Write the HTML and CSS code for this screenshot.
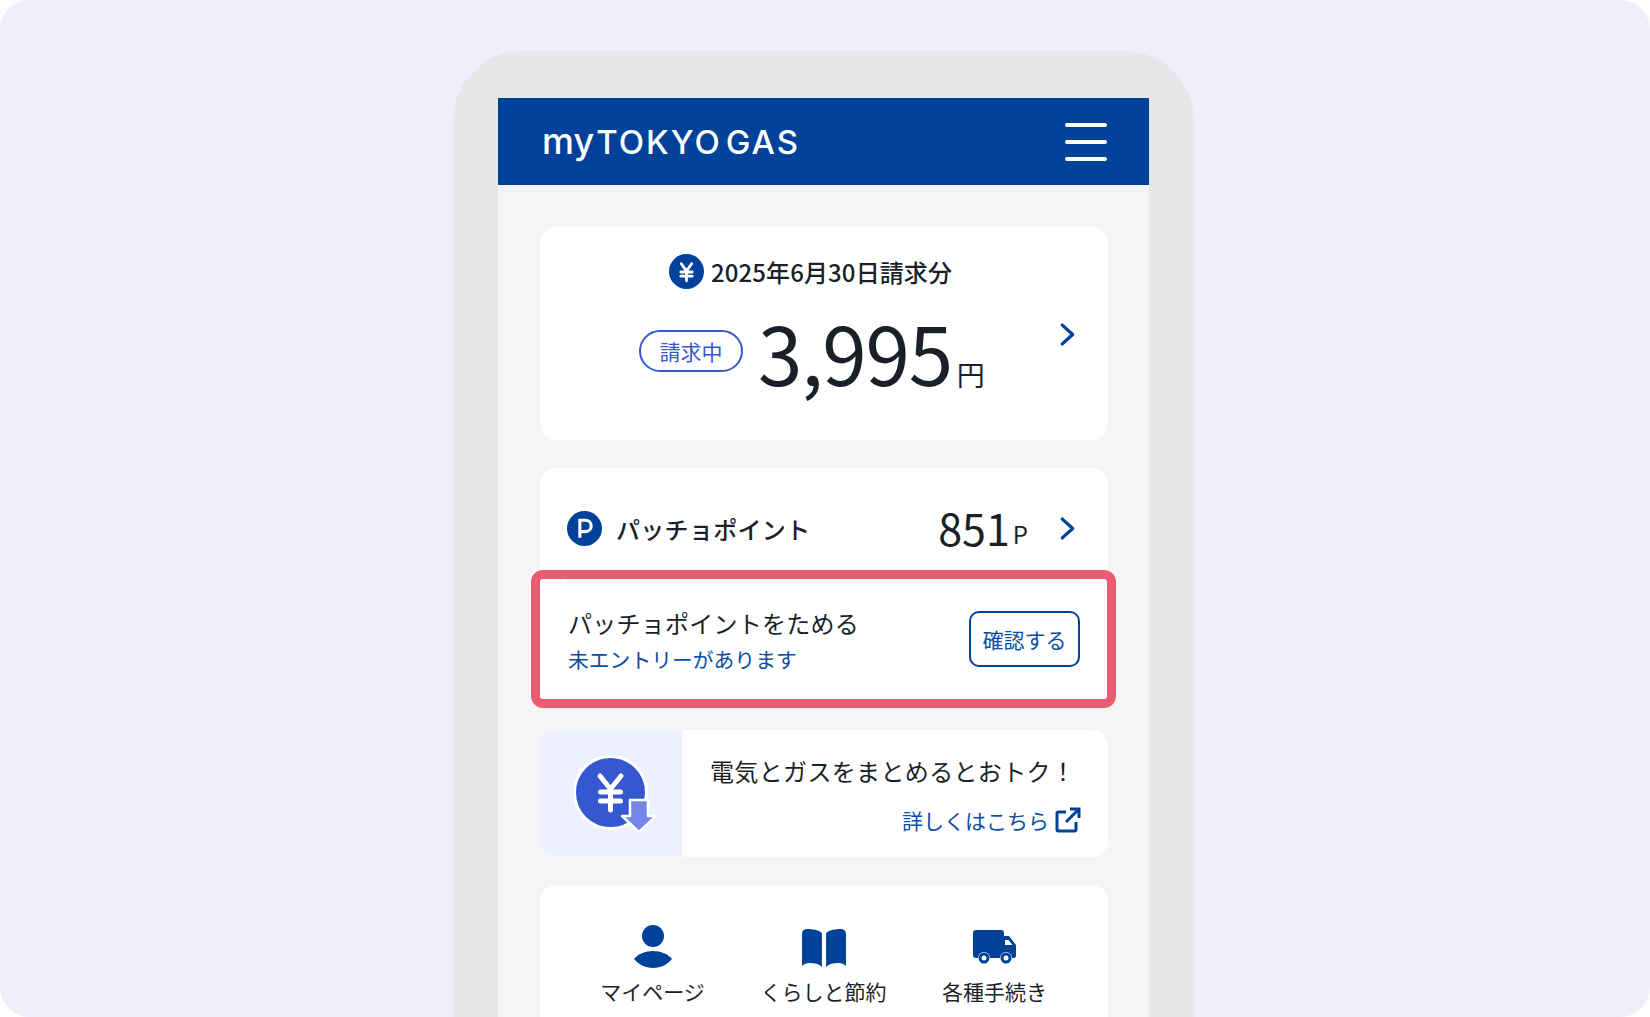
FILE: index.html
```html
<!DOCTYPE html>
<html lang="ja">
<head>
    <meta charset="UTF-8">
    <meta name="viewport" content="width=device-width, initial-scale=1.0">
    <title>myTOKYOGAS</title>
    <link rel="stylesheet" href="styles.css">
</head>
<body>
    <div class="stage">
        <div class="phone">
            <header class="app-header">
                <div class="logo"><span class="logo-my">my</span><span class="logo-tokyo">TOKYO</span><span class="logo-gas">GAS</span></div>
                <div class="menu-btn"><span></span><span></span><span></span></div>
            </header>

            <main class="content">
                <section class="card bill">
                    <div class="bill-title">
                        <svg class="icon-circle" viewBox="0 0 34 34"><circle cx="17" cy="17" r="17" fill="#00419a"/><path d="M12 9.500l5 7 5-7M11.500 17.500h11M11.500 21.500h11M17 17v9" fill="none" stroke="#fff" stroke-width="2.800" stroke-linecap="round" stroke-linejoin="round"/></svg>
                        <span>2025年6月30日請求分</span>
                    </div>
                    <div class="bill-amount">
                        <span class="badge">請求中</span>
                        <span class="amount">3,995</span>
                        <span class="yen">円</span>
                    </div>
                    <svg class="chevron chevron-bill" viewBox="0 0 16 24"><path d="M3 3l10 9-10 9" fill="none" stroke="#00419a" stroke-width="3.200" stroke-linecap="round" stroke-linejoin="round"/></svg>
                </section>

                <section class="card points">
                    <div class="points-row">
                        <svg class="icon-circle" viewBox="0 0 34 34"><circle cx="17" cy="17" r="17" fill="#00419a"/><path d="M12.500 26V9h5.500a5.500 5.500 0 0 1 0 11h-5.500" fill="none" stroke="#fff" stroke-width="3"/></svg>
                        <span class="points-label">パッチョポイント</span>
                        <span class="points-value">851</span>
                        <span class="points-unit">P</span>
                        <svg class="chevron" viewBox="0 0 16 24"><path d="M3 3l10 9-10 9" fill="none" stroke="#00419a" stroke-width="3.200" stroke-linecap="round" stroke-linejoin="round"/></svg>
                    </div>
                    <div class="highlight">
                        <div class="divider"></div>
                        <div class="entry-row">
                            <div>
                                <div class="entry-title">パッチョポイントをためる</div>
                                <div class="entry-sub">未エントリーがあります</div>
                            </div>
                            <a class="confirm-btn" href="#">確認する</a>
                        </div>
                    </div>
                </section>

                <section class="card promo">
                    <div class="promo-icon">
                        <svg viewBox="0 0 84 80" width="84" height="80">
                            <circle cx="36.500" cy="36.500" r="36" fill="#3558cf" stroke="#fff" stroke-width="3"/>
                            <path d="M26 20l10.500 13L47 20M26.500 36h20M26.500 45h20M36.500 33v21" fill="none" stroke="#fff" stroke-width="5" stroke-linecap="round" stroke-linejoin="round"/>
                            <path d="M56 44h18v16h8L65 76 48 60h8z" fill="#7387e8" stroke="#fff" stroke-width="2.500" stroke-linejoin="round"/>
                        </svg>
                    </div>
                    <div class="promo-body">
                        <div class="promo-title">電気とガスをまとめるとおトク！</div>
                        <a class="promo-link" href="#">詳しくはこちら
                            <svg viewBox="0 0 26 26" width="26" height="26"><path d="M11 5H3.500A1.500 1.500 0 0 0 2 6.500v16A1.500 1.500 0 0 0 3.500 24h16a1.500 1.500 0 0 0 1.500-1.500V15M15 2h9v9M24 2L11 15" fill="none" stroke="#00419a" stroke-width="3"/></svg>
                        </a>
                    </div>
                </section>

                <section class="card shortcuts">
                    <a class="shortcut" href="#">
                        <div class="shortcut-icon"><svg viewBox="0 0 40 44" width="40" height="44"><circle cx="20" cy="11" r="11" fill="#00419a"/><path d="M1 34c4-5 11-8 19-8s15 3 19 8c-4 5-11 9-19 9S5 39 1 34z" fill="#00419a"/></svg></div>
                        <span>マイページ</span>
                    </a>
                    <a class="shortcut" href="#">
                        <div class="shortcut-icon"><svg viewBox="0 0 44 40" width="46" height="39" preserveAspectRatio="none"><path d="M1 6c0-3 2-5 5-5 5 0 11 1 14 4v35c-3-3-7-4-12-4-3 0-5 1-7 3zM43 6c0-3-2-5-5-5-5 0-11 1-14 4v35c3-3 7-4 12-4 3 0 5 1 7 3z" fill="#00419a"/></svg></div>
                        <span>くらしと節約</span>
                    </a>
                    <a class="shortcut" href="#">
                        <div class="shortcut-icon"><svg viewBox="0 0 44 36" width="44" height="36"><path d="M3 1h25a3 3 0 0 1 3 3v3h5l7 9v11a2 2 0 0 1-2 2h-2a6 6 0 0 0-12 0H17a6 6 0 0 0-12 0H3a3 3 0 0 1-3-3V4a3 3 0 0 1 3-3z" fill="#00419a"/><path d="M32 11h3.500l4 5H32z" fill="#fff"/><circle cx="11" cy="29" r="5.500" fill="#00419a"/><circle cx="11" cy="29" r="2.500" fill="#fff"/><circle cx="33" cy="29" r="5.500" fill="#00419a"/><circle cx="33" cy="29" r="2.500" fill="#fff"/></svg></div>
                        <span>各種手続き</span>
                    </a>
                </section>
            </main>
        </div>
    </div>
</body>
</html>
```

FILE: styles.css
```css
* {
    box-sizing: border-box;
}

html, body {
    margin: 0;
    height: 1017px;
    overflow: hidden;
    background-color: #fff;
}

body {
    font-family: "Noto Sans CJK JP", "Noto Sans", sans-serif;
    color: #1b1f27;
}

a {
    text-decoration: none;
}

.stage {
    height: 1017px;
    padding: 51px 0 0 453px;
    background-color: #eeeffa;
    border-radius: 30px;
    overflow: hidden;
}

.phone {
    width: 741px;
    height: 966px;
    padding: 47px 45px 0;
    background-color: #e6e7e9;
    border-radius: 70px 70px 0 0;
}

.app-header {
    height: 87px;
    padding: 0 42px 0 44px;
    display: flex;
    align-items: center;
    justify-content: space-between;
    background-color: #00419a;
    color: #fff;
}

.logo {
    display: flex;
    align-items: baseline;
    padding-bottom: 2px;
    font-family: Inter, "Noto Sans", sans-serif;
    font-size: 33px;
    font-weight: 500;
}

.logo-my {
    margin-right: 2px;
    font-size: 36px;
}

.logo-tokyo {
    letter-spacing: 2px;
}

.logo-gas {
    margin-left: 4px;
    letter-spacing: 2px;
}

.menu-btn {
    width: 42px;
    display: flex;
    flex-direction: column;
    gap: 13px;
}

.menu-btn span {
    height: 4px;
    border-radius: 2px;
    background-color: #fff;
}

.content {
    height: 832px;
    padding: 42px 41px 0 42px;
    background-color: #f5f5f5;
}

.card {
    background-color: #fff;
    border-radius: 16px;
}

.icon-circle {
    width: 35px;
    height: 35px;
    flex: none;
}

.chevron {
    width: 17px;
    height: 25px;
    flex: none;
}

.bill {
    position: relative;
    height: 213px;
    padding-top: 27px;
}

.bill-title {
    display: flex;
    align-items: center;
    justify-content: center;
    gap: 7px;
    padding-right: 27px;
    font-size: 24px;
    font-weight: 500;
    letter-spacing: 0.1px;
}

.bill-amount {
    display: flex;
    align-items: baseline;
    padding-left: 99px;
    margin-top: 10px;
}

.badge {
    width: 104px;
    height: 42px;
    border: 2px solid #3558cf;
    border-radius: 21px;
    color: #3558cf;
    font-size: 21px;
    line-height: 38px;
    text-align: center;
    align-self: center;
}

.amount {
    margin-left: 15px;
    font-size: 80px;
    line-height: 104px;
    letter-spacing: -1.200px;
}

.yen {
    margin-left: 5px;
    font-size: 28px;
}

.chevron-bill {
    position: absolute;
    top: 95px;
    right: 32px;
}

.points {
    margin-top: 28px;
    height: 231px;
}

.points-row {
    height: 102px;
    padding: 19px 32px 0 27px;
    display: flex;
    align-items: center;
}

.points-label {
    margin-left: 14px;
    font-size: 24px;
    font-weight: 500;
    letter-spacing: 0.3px;
    flex: 1;
}

.points-value {
    margin-bottom: 4px;
    font-size: 43px;
}

.points-unit {
    margin: 10px 31px 0 3px;
    font-size: 24px;
}

.highlight {
    margin: 0 -8px 0 -9px;
    height: 138px;
    border: 9px solid #e85d75;
    border-radius: 12px;
    background-color: #fff;
}

.divider {
    height: 4px;
    margin: 0 27px;
    background-color: #f5f5f5;
}

.entry-row {
    padding: 22px 27px 0 28px;
    display: flex;
    justify-content: space-between;
}

.entry-title {
    font-size: 24px;
    line-height: 36px;
    letter-spacing: 0.25px;
}

.entry-sub {
    margin-top: 2px;
    font-size: 20.800px;
    line-height: 32px;
    color: #0b4ea2;
}

.confirm-btn {
    width: 111px;
    height: 56px;
    margin-top: 6px;
    border: 2px solid #00419a;
    border-radius: 10px;
    color: #0b4ea2;
    font-size: 21px;
    line-height: 52px;
    text-align: center;
}

.promo {
    margin-top: 31px;
    height: 127px;
    display: flex;
    overflow: hidden;
}

.promo-icon {
    width: 142px;
    padding: 26px 0 0 34px;
    background-color: #eef0ff;
}

.promo-body {
    flex: 1;
    padding: 21px 27px 0 28px;
}

.promo-title {
    font-size: 24px;
    line-height: 40px;
    letter-spacing: 0.35px;
    white-space: nowrap;
}

.promo-link {
    margin-top: 14px;
    display: flex;
    align-items: center;
    justify-content: flex-end;
    gap: 6px;
    color: #0b4ea2;
    font-size: 21px;
}

.shortcuts {
    margin-top: 28px;
    height: 200px;
    padding: 40px 0 0 27px;
    display: flex;
}

.shortcut {
    width: 171px;
    display: flex;
    flex-direction: column;
    align-items: center;
    color: #1b1f27;
    font-size: 21px;
    line-height: 30px;
}

.shortcut-icon {
    height: 44px;
    margin-bottom: 7px;
    display: flex;
    align-items: center;
}
```
